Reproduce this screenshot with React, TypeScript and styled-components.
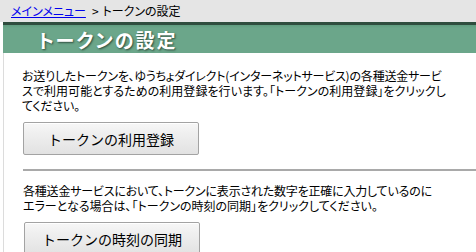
import React from 'react';
import styled, { createGlobalStyle } from 'styled-components';

const GlobalStyle = createGlobalStyle`
  html, body {
    margin: 0;
    padding: 0;
    background: #fff;
  }
  body {
    font-family: "Noto Sans CJK JP", "Noto Sans", sans-serif;
    font-feature-settings: "palt";
    color: #000;
  }
`;

// Breadcrumb bar along the top
const Breadcrumb = styled.div`
  height: 22px;
  background: #e5e5e5;
  display: flex;
  align-items: center;
  padding-left: 11px;
  font-size: 12px;
  line-height: 12px;
  white-space: nowrap;
`;

const CrumbLink = styled.a`
  color: #0000ee;
  text-decoration: underline;
  cursor: pointer;
`;

const Separator = styled.span`
  margin: 0 4px 0 6px;
`;

const Panel = styled.div`
  margin-left: 3px;
  border-left: 1px solid #dcdcdc;
`;

const PageTitle = styled.h1`
  margin: 0 0 0 -1px;
  height: 28px;
  border-top: 3px solid #2f4d3e;
  background: linear-gradient(#5f9c7f 0, #6ba68a 3px, #6ba68a 100%);
  display: flex;
  align-items: center;
  padding-left: 35px;
  color: #fff;
  font-size: 19px;
  font-weight: bold;
  letter-spacing: 2px;
  text-shadow: 1px 1px 2px #2c4a3b;
`;

const Content = styled.div`
  padding: 15px 0 0 18px;
`;

const Section = styled.div<{ $divided?: boolean }>`
  border-top: ${({ $divided }) => ($divided ? '2px solid #a9a9a9' : 'none')};
  padding-top: ${({ $divided }) => ($divided ? '12px' : '0')};
  margin-top: ${({ $divided }) => ($divided ? '14px' : '0')};
  margin-left: ${({ $divided }) => ($divided ? '1px' : '0')};
`;

const Text = styled.div`
  margin: 0 0 9px;
  display: flex;
  flex-direction: column;
  font-size: 12px;
`;

const Line = styled.span<{ $spacing?: number }>`
  display: block;
  height: 15px;
  line-height: 15px;
  overflow: visible;
  white-space: nowrap;
  letter-spacing: ${({ $spacing }) => ($spacing ?? -0.2)}px;
`;

const ActionButton = styled.button`
  display: block;
  width: 176px;
  height: 33px;
  margin-left: 1px;
  padding: 0;
  border: 1px solid #a3a3a3;
  border-radius: 2px;
  background: linear-gradient(#f7f7f7 0%, #f0f0f0 30%, #e8e8e8 70%, #e2e2e2 100%);
  box-shadow: inset 0 1px 0 #fff;
  font-family: "Noto Sans CJK JP", sans-serif;
  font-size: 14px;
  color: #000;
  cursor: pointer;
`;

const App: React.FC = () => {
  return (
    <>
      <GlobalStyle />
      <Breadcrumb>
        <CrumbLink>メインメニュー</CrumbLink>
        <Separator>&gt;</Separator>
        <span>トークンの設定</span>
      </Breadcrumb>
      <Panel>
        <PageTitle>トークンの設定</PageTitle>
        <Content>
          <Section>
            <Text>
              <Line>お送りしたトークンを、ゆうちょダイレクト(インターネットサービス)の各種送金サービ</Line>
              <Line $spacing={0.05}>スで利用可能とするための利用登録を行います。「トークンの利用登録」をクリックし</Line>
              <Line>てください。</Line>
            </Text>
            <ActionButton>トークンの利用登録</ActionButton>
          </Section>
          <Section $divided>
            <Text>
              <Line>各種送金サービスにおいて、トークンに表示された数字を正確に入力しているのに</Line>
              <Line $spacing={0}>エラーとなる場合は、「トークンの時刻の同期」をクリックしてください。</Line>
            </Text>
            <ActionButton>トークンの時刻の同期</ActionButton>
          </Section>
        </Content>
      </Panel>
    </>
  );
};

export default App;
